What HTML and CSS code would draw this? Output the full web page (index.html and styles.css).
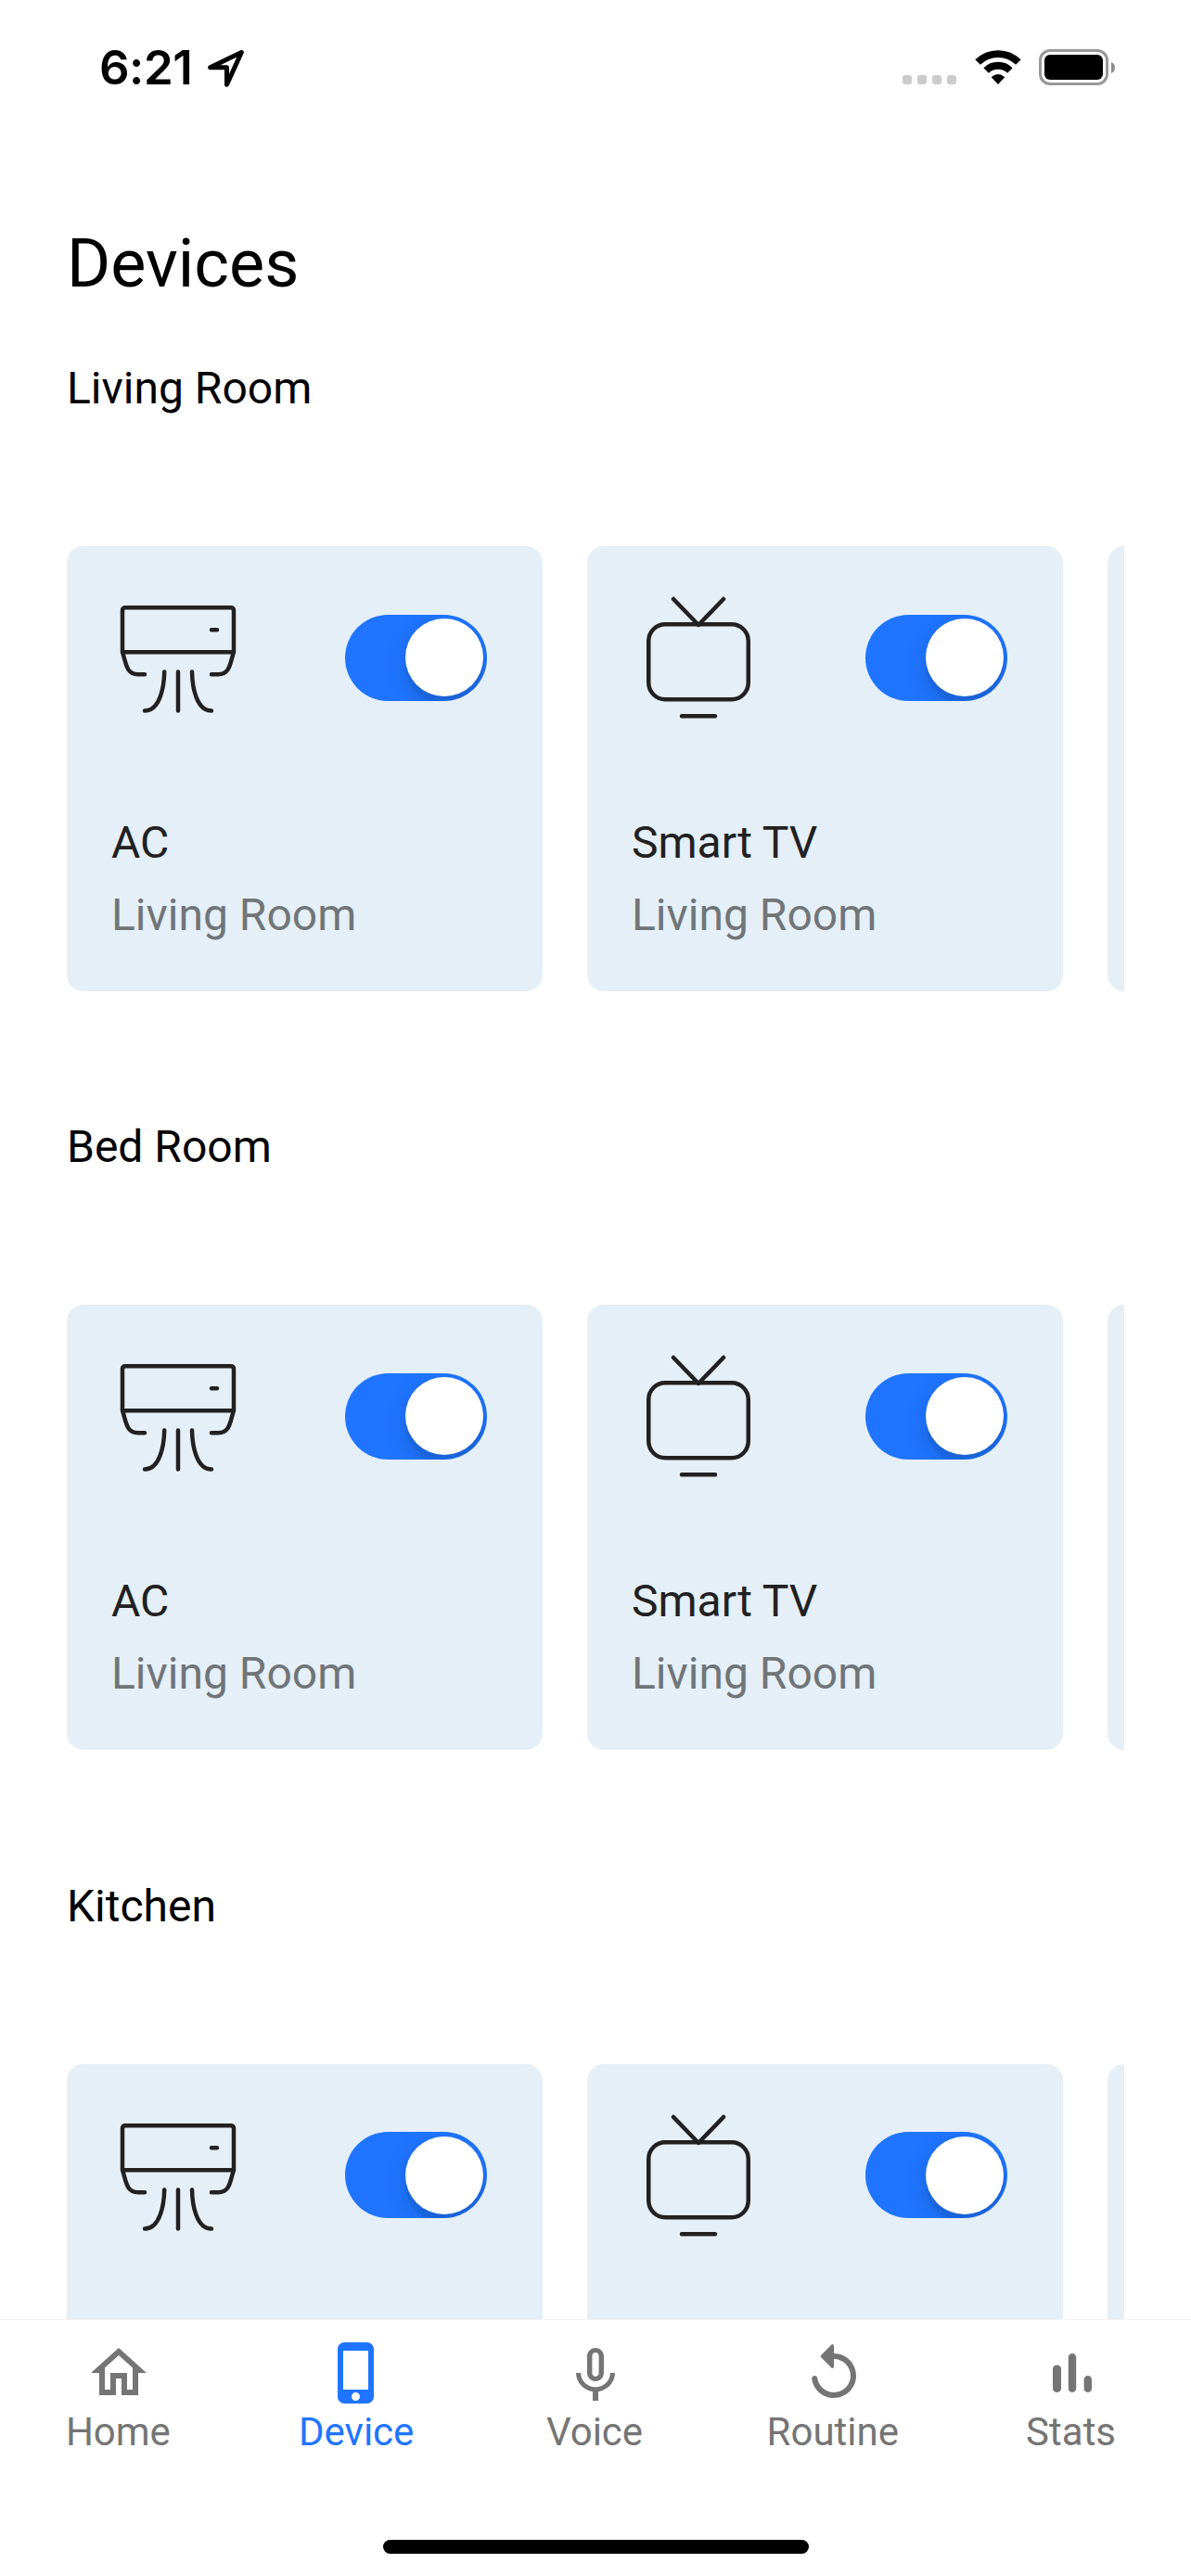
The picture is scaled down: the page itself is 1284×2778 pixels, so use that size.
FILE: index.html
```html
<!DOCTYPE html>
<html lang="en">
<head>
<meta charset="utf-8">
<title>Devices</title>
<link rel="stylesheet" href="styles.css">
</head>
<body>
<svg class="defs" aria-hidden="true">
  <symbol id="ac" viewBox="0 0 144 144">
    <path d="M12 66.250V21.550q0-3.300 3.300-3.300h113.400q3.300 0 3.300 3.300V66.250zM12 66.250c2.600 7.500 3.200 14 6.500 19q3.500 5 10 5H36M132 66.250c-2.600 7.500-3.200 14-6.500 19q-3.500 5-10 5H108M108 42.250h6M72 87.500v42M57.200 87.500c-.3 16-4.700 42-21.200 42M87 87.500c.3 16 4.500 42 21 42"/>
  </symbol>
  <symbol id="tv" viewBox="0 0 144 144">
    <path d="M45 9l27 28 27-28M54 135.250h36"/><rect x="18.250" y="36.250" width="107.500" height="81" rx="18"/>
  </symbol>
</svg>
<div class="app">
  <header class="status">
    <div class="time">6:21</div>
    <svg class="location" width="44" height="44" viewBox="0 0 44 44"><path d="M38.300 6.500L4.700 22.800H22.500V41.300z"/></svg>
    <div class="dots"><i></i><i></i><i></i><i></i></div>
    <svg class="wifi" width="52" height="39" viewBox="0 0 52 39"><path d="M4.100 14.100a31 31 0 0 1 43.800 0M13.100 23.100a18.250 18.250 0 0 1 25.800 0"/><path class="wedge" d="M18.700 30.200q7.300-6.400 14.600 0L26 38z"/></svg>
    <div class="battery"><div class="cell"><b></b></div><svg width="4" height="12" viewBox="0 0 4 12"><path d="M0 0a6.500 6.500 0 0 1 0 12z"/></svg></div>
  </header>
  <main class="content">
    <h1>Devices</h1>
    <section class="room">
      <h2>Living Room</h2>
      <div class="cards">
        <article class="card"><div class="top"><svg class="device"><use href="#ac"/></svg><span class="switch"><i></i></span></div><h3>AC</h3><p>Living Room</p></article>
        <article class="card"><div class="top"><svg class="device"><use href="#tv"/></svg><span class="switch"><i></i></span></div><h3>Smart TV</h3><p>Living Room</p></article>
        <article class="card"></article>
      </div>
    </section>
    <section class="room">
      <h2>Bed Room</h2>
      <div class="cards">
        <article class="card"><div class="top"><svg class="device"><use href="#ac"/></svg><span class="switch"><i></i></span></div><h3>AC</h3><p>Living Room</p></article>
        <article class="card"><div class="top"><svg class="device"><use href="#tv"/></svg><span class="switch"><i></i></span></div><h3>Smart TV</h3><p>Living Room</p></article>
        <article class="card"></article>
      </div>
    </section>
    <section class="room">
      <h2>Kitchen</h2>
      <div class="cards">
        <article class="card"><div class="top"><svg class="device"><use href="#ac"/></svg><span class="switch"><i></i></span></div></article>
        <article class="card"><div class="top"><svg class="device"><use href="#tv"/></svg><span class="switch"><i></i></span></div></article>
        <article class="card"></article>
      </div>
    </section>
  </main>
  <footer class="bottom">
    <nav class="tabs">
      <a class="tab"><svg viewBox="0 0 24 24"><path d="M12 5.690l5 4.500V18h-2v-6H9v6H7v-7.810l5-4.500M12 3L2 12h3v8h6v-6h2v6h6v-8h3L12 3z"/></svg><span>Home</span></a>
      <a class="tab active"><svg viewBox="0 0 24 24"><path d="M15.500 1h-8C6.120 1 5 2.120 5 3.500v17C5 21.880 6.120 23 7.500 23h8c1.380 0 2.500-1.120 2.500-2.500v-17C18 2.120 16.880 1 15.500 1zm-4 21c-.83 0-1.500-.67-1.500-1.500s.67-1.500 1.500-1.500 1.500.67 1.500 1.500-.67 1.500-1.500 1.500zm4.500-4H7V4h9v14z"/></svg><span>Device</span></a>
      <a class="tab"><svg viewBox="0 0 24 24"><path d="M12 15c1.660 0 2.990-1.340 2.990-3L15 6c0-1.660-1.340-3-3-3S9 4.340 9 6v6c0 1.660 1.340 3 3 3zm-1.200-9.100c0-.66.54-1.200 1.200-1.200s1.200.54 1.200 1.200l-.01 6.200c0 .66-.53 1.200-1.190 1.200s-1.200-.54-1.200-1.200V5.900zm6.500 6.100c0 3-2.540 5.100-5.300 5.100S6.700 15 6.700 12H5c0 3.410 2.720 6.230 6 6.720V22h2v-3.280c3.280-.48 6-3.300 6-6.720h-1.700z"/></svg><span>Voice</span></a>
      <a class="tab"><svg viewBox="0 0 24 24"><path d="M12 5V2.210c0-.45-.54-.67-.85-.35l-3.800 3.790c-.2.200-.2.510 0 .71l3.790 3.790c.32.310.86.090.86-.36V7c3.730 0 6.680 3.420 5.860 7.290-.47 2.270-2.310 4.100-4.570 4.570-3.570.75-6.750-1.700-7.230-5.010-.07-.48-.49-.85-.98-.85-.6 0-1.080.53-1 1.130.62 4.390 4.800 7.640 9.530 6.720 3.120-.61 5.630-3.120 6.240-6.240C20.840 9.480 16.940 5 12 5z"/></svg><span>Routine</span></a>
      <a class="tab"><svg viewBox="0 0 24 24"><path d="M6.400 9.200h.2c.77 0 1.400.63 1.400 1.400v7c0 .77-.63 1.400-1.400 1.400h-.2c-.77 0-1.400-.63-1.400-1.400v-7c0-.77.63-1.400 1.400-1.400zM12 5c.77 0 1.400.63 1.400 1.400v11.200c0 .77-.63 1.400-1.400 1.400s-1.400-.63-1.400-1.400V6.400c0-.77.63-1.400 1.400-1.400zm5.600 8c.77 0 1.400.63 1.400 1.400v3.200c0 .77-.63 1.400-1.400 1.400s-1.400-.63-1.400-1.400v-3.200c0-.77.63-1.400 1.400-1.400z"/></svg><span>Stats</span></a>
    </nav>
    <div class="indicator"></div>
  </footer>
</div>
</body>
</html>
```
FILE: styles.css
```css
* { box-sizing: border-box; margin: 0; padding: 0; }
body { background: #fff; font-family: Roboto, "Liberation Sans", sans-serif; color: #000; }
.defs { display: none; }
.app { width: 1284px; height: 2778px; display: flex; flex-direction: column; overflow: hidden; }

.status { height: 141px; flex: none; display: flex; align-items: flex-start; padding: 53px 82px 0 107px; }
.time { width: 115px; height: 40px; font: 600 51px/40px Inter, sans-serif; letter-spacing: -0.5px; }
.location { margin-top: -3px; fill: none; stroke: #000; stroke-width: 5; stroke-linejoin: round; }
.dots { display: flex; gap: 6px; margin: 28px 19px 0 auto; }
.dots i { width: 10px; height: 10px; border-radius: 3px; background: #cbcbcb; }
.wifi { fill: none; stroke: #000; stroke-width: 7.800; margin-right: 18px; }
.wifi .wedge { fill: #000; stroke: none; }
.battery { display: flex; align-items: center; gap: 3px; fill: #8c8c8c; }
.cell { width: 75px; height: 39px; padding: 3px; border: 3px solid #999; border-radius: 12px; }
.cell b { display: block; height: 27px; border-radius: 6px; background: #000; }

.content { flex: 1; min-height: 0; overflow: hidden; padding: 101px 72px 0; }
h1 { font-size: 72px; font-weight: 400; line-height: 85px; margin-bottom: 63px; }
.room { height: 818.330px; }
h2 { font-size: 48px; font-weight: 400; line-height: 57px; }
.cards { display: flex; gap: 48px; margin-top: 142px; overflow: hidden; }
.card { flex: none; width: 513px; height: 480px; padding: 48px; border-radius: 18px; background: #e4eff7; }
.top { display: flex; align-items: center; justify-content: space-between; padding-right: 12px; margin-bottom: 99px; }
.device { width: 144px; height: 144px; fill: none; stroke: #212121; stroke-width: 4.500; stroke-linecap: round; stroke-linejoin: round; }
.switch { display: flex; justify-content: flex-end; width: 153px; height: 93px; padding: 4.500px; border-radius: 47px; background: #1f75ff; overflow: hidden; }
.switch i { width: 84px; height: 84px; border-radius: 50%; background: #fff; box-shadow: 0 9px 24px rgba(0,0,0,.15), 0 9px 3px rgba(0,0,0,.06); }
h3, .card p { font-size: 48px; font-weight: 400; line-height: 57px; }
h3 { color: #212121; margin-bottom: 21px; }
.card p { color: #707578; }

.bottom { height: 277px; flex: none; border-top: 1px solid #f3f3f3; display: flex; flex-direction: column; align-items: center; justify-content: space-between; padding: 21px 0 24px; }
.tabs { display: grid; grid-template-columns: repeat(5, 1fr); width: 100%; }
.tab { display: flex; flex-direction: column; align-items: center; gap: 3px; font-size: 42px; line-height: 49px; color: #757575; }
.tab svg { width: 72px; height: 72px; fill: currentColor; }
.tab span { margin-right: 2px; }
.tab.active { color: #1f75ff; }
.indicator { width: 459px; height: 15px; border-radius: 8px; background: #000; }
```
